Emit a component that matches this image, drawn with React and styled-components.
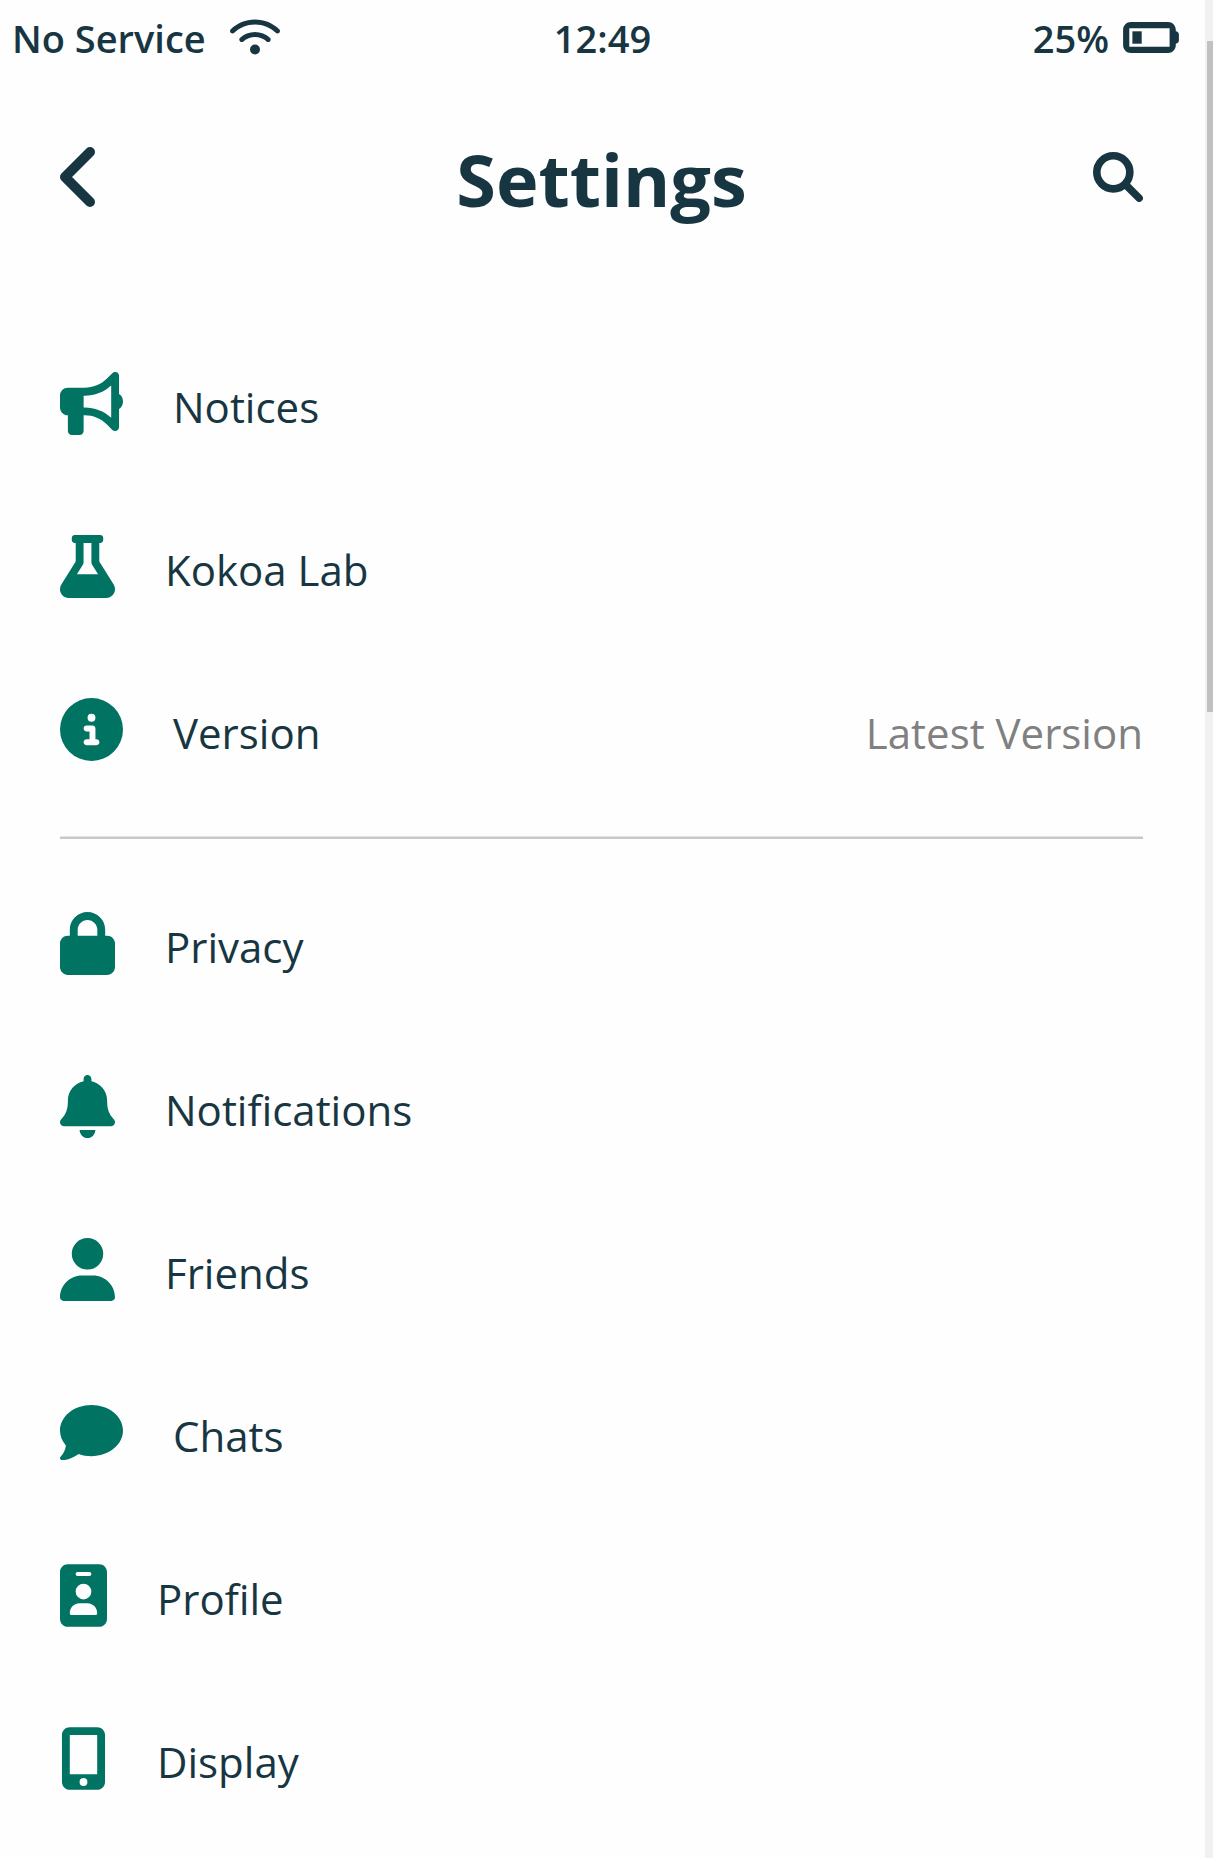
import React from "react";
import styled, { createGlobalStyle } from "styled-components";
import { FaFlask } from "react-icons/fa";
import {
  FaBell,
  FaBullhorn,
  FaCircleInfo,
  FaComment,
  FaIdBadge,
  FaLock,
  FaMobileScreenButton,
  FaUser,
  FaWifi,
} from "react-icons/fa6";

const ink = "#183642";
const accent = "#007363";

const GlobalStyle = createGlobalStyle`
  * { box-sizing: border-box; }
  body {
    margin: 0;
    background: #fefefe;
    color: ${ink};
    font-family: "Segoe UI", "Open Sans", "Noto Sans", sans-serif;
  }
`;

const Page = styled.div`
  display: flex;
  min-height: 100vh;
`;

const Screen = styled.div`
  flex: 1;
  min-width: 0;
`;

const StatusBar = styled.div`
  display: grid;
  grid-template-columns: 1fr auto 1fr;
  align-items: center;
  height: 74px;
  padding: 0 12px;
  font-size: 38px;
  font-weight: 600;
  line-height: 48px;
`;

const StatusGroup = styled.div`
  display: flex;
  align-items: center;
  justify-content: ${(p) => (p.$end ? "flex-end" : "flex-start")};
  gap: ${(p) => (p.$end ? 14 : 24)}px;
  padding-right: ${(p) => (p.$end ? 14 : 0)}px;

  svg {
    flex: none;
    display: block;
  }
`;

const WifiIcon = styled(FaWifi)`
  width: 50px;
  height: 40px;
`;

const StatusText = styled.span`
  padding-top: 2px;
  white-space: nowrap;
`;

const Header = styled.header`
  display: grid;
  grid-template-columns: 1fr auto 1fr;
  align-items: center;
  height: 206px;
  padding: 0 62px 0 60px;
`;

const IconButton = styled.button`
  display: block;
  justify-self: ${(p) => (p.$end ? "end" : "start")};
  padding: 0;
  border: 0;
  background: none;
  color: inherit;
  cursor: pointer;

  svg {
    display: block;
  }
`;

const Title = styled.h1`
  margin: 0;
  padding-top: 4px;
  font-size: 72px;
  font-weight: 700;
  line-height: 96px;
`;

const Content = styled.main`
  padding: 42px 62px 0 60px;
`;

const List = styled.ul`
  margin: 0;
  padding: 0;
  list-style: none;
`;

const RowLink = styled.a`
  display: flex;
  align-items: center;
  gap: 50px;
  height: 163px;
  color: inherit;
  font-size: 42px;
  line-height: 60px;
  text-decoration: none;

  svg {
    flex: none;
    display: block;
    width: ${(p) => p.$iconWidth}px;
    height: 63px;
    color: ${accent};
  }
`;

const Label = styled.span`
  padding-top: 6px;
`;

const Value = styled(Label)`
  margin-left: auto;
  color: #808080;
`;

const Divider = styled.hr`
  height: 3px;
  margin: 25px 0 23px;
  border: 0;
  border-top: 1px solid #e4e4e4;
  background: #c8c8c8;
`;

const ScrollTrack = styled.div`
  flex: none;
  width: 8px;
  padding: 41px 0 0 2px;
  background: #f1f1f1;
`;

const ScrollThumb = styled.div`
  height: 671px;
  background: #c1c1c1;
`;

const BackIcon = () => (
  <svg width="35" height="60" viewBox="0 0 35 60" fill="none" stroke="currentColor" strokeWidth="10" strokeLinecap="round" strokeLinejoin="round" aria-hidden="true">
    <path d="M30 5 5 30l25 25" />
  </svg>
);

const SearchIcon = () => (
  <svg width="50" height="50" viewBox="0 0 512 512" fill="none" stroke="currentColor" strokeLinecap="round" aria-hidden="true">
    <circle cx="208" cy="208" r="169" strokeWidth="78" />
    <path d="M335 335 472 472" strokeWidth="78" />
  </svg>
);

const BatteryIcon = () => (
  <svg width="56" height="31" viewBox="0 96 576 320" fill="currentColor" aria-hidden="true">
    <path fillRule="evenodd" d="M80 96h384c44 0 80 36 80 80v16c18 0 32 14 32 32v64c0 18-14 32-32 32v16c0 44-36 80-80 80H80c-44 0-80-36-80-80V176c0-44 36-80 80-80zM64 160v192h416V160z" />
    <path d="M96 192h96v128H96z" />
  </svg>
);

const appItems = [
  { label: "Notices", Icon: FaBullhorn, iconWidth: 63 },
  { label: "Kokoa Lab", Icon: FaFlask, iconWidth: 55 },
  { label: "Version", Icon: FaCircleInfo, iconWidth: 63, value: "Latest Version" },
];

const userItems = [
  { label: "Privacy", Icon: FaLock, iconWidth: 55 },
  { label: "Notifications", Icon: FaBell, iconWidth: 55 },
  { label: "Friends", Icon: FaUser, iconWidth: 55 },
  { label: "Chats", Icon: FaComment, iconWidth: 63 },
  { label: "Profile", Icon: FaIdBadge, iconWidth: 47 },
  { label: "Display", Icon: FaMobileScreenButton, iconWidth: 47 },
];

function SettingsList({ items }) {
  return (
    <List>
      {items.map(({ label, Icon, iconWidth, value }) => (
        <li key={label}>
          <RowLink href="#" $iconWidth={iconWidth}>
            <Icon aria-hidden="true" />
            <Label>{label}</Label>
            {value && <Value>{value}</Value>}
          </RowLink>
        </li>
      ))}
    </List>
  );
}

export default function App() {
  return (
    <>
      <GlobalStyle />
      <Page>
        <Screen>
          <StatusBar>
            <StatusGroup>
              <StatusText>No Service</StatusText>
              <WifiIcon aria-hidden="true" />
            </StatusGroup>
            <StatusText>12:49</StatusText>
            <StatusGroup $end>
              <StatusText>25%</StatusText>
              <BatteryIcon />
            </StatusGroup>
          </StatusBar>
          <Header>
            <IconButton type="button" aria-label="Back">
              <BackIcon />
            </IconButton>
            <Title>Settings</Title>
            <IconButton type="button" aria-label="Search" $end>
              <SearchIcon />
            </IconButton>
          </Header>
          <Content>
            <SettingsList items={appItems} />
            <Divider />
            <SettingsList items={userItems} />
          </Content>
        </Screen>
        <ScrollTrack aria-hidden="true">
          <ScrollThumb />
        </ScrollTrack>
      </Page>
    </>
  );
}
